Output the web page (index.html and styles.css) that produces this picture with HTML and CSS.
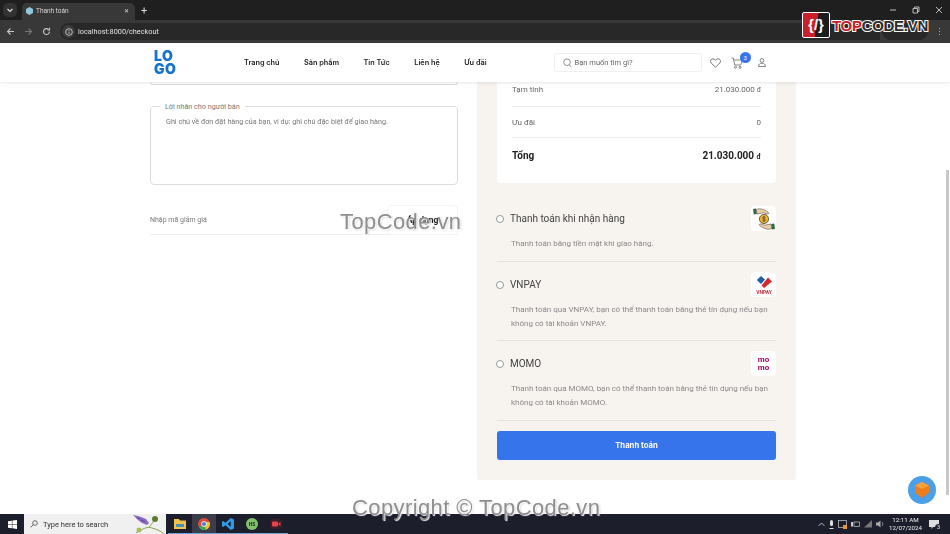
FILE: index.html
```html
<!DOCTYPE html>
<html>
  <head>
    <meta charset="utf-8" />
    <title>Thanh toán</title>
    <link rel="stylesheet" href="styles.css">
  </head>

  <body>
    <div class="screen">
      <!-- browser chrome -->
      <div class="tabstrip">
        <div class="tab-menu">
          <svg width="8" height="8" viewBox="0 0 8 8"><path d="M1.5 3l2.5 2.5L6.500 3" fill="none" stroke="#ddd" stroke-width="1.200"/></svg>
        </div>
        <div class="tab">
          <svg width="7" height="8" viewBox="0 0 7 8"><path d="M3.500 0L7 2v4L3.500 8 0 6V2z" fill="#8fc7dc"/></svg>
          <span class="tab-title">Thanh toán</span>
          <span class="tab-close">✕</span>
        </div>
        <span class="tab-new">+</span>
        <div class="window-btns">
          <svg width="8" height="8" viewBox="0 0 8 8"><path d="M1 4h6" stroke="#bbb" fill="none"/></svg>
          <svg width="8" height="8" viewBox="0 0 8 8"><path d="M1 2.500h4.500V7H1zM2.500 2.500V1H7v4.500H5.500" stroke="#bbb" fill="none"/></svg>
          <svg width="8" height="8" viewBox="0 0 8 8"><path d="M1 1l6 6M7 1L1 7" stroke="#bbb" fill="none"/></svg>
        </div>
      </div>
      <div class="toolbar">
        <svg class="nav-icon" width="9" height="9" viewBox="0 0 9 9"><path d="M8 4.500H1.500M4.500 1.500l-3 3 3 3" fill="none" stroke="#c7c7c7" stroke-width="1.100"/></svg>
        <svg class="nav-icon" width="9" height="9" viewBox="0 0 9 9"><path d="M1 4.500h6.500M4.500 1.500l3 3-3 3" fill="none" stroke="#757575" stroke-width="1.100"/></svg>
        <svg class="nav-icon" width="9" height="9" viewBox="0 0 9 9"><path d="M7.500 4.500a3 3 0 1 1-1-2.200M7.500 0.800v2.200H5.300" fill="none" stroke="#c7c7c7" stroke-width="1.100"/></svg>
        <div class="omnibox">
          <span class="site-info">
            <svg width="8" height="8" viewBox="0 0 8 8"><circle cx="4" cy="4" r="3.300" fill="none" stroke="#ddd" stroke-width=".8"/><path d="M4 3.500v2.200M4 2v.8" stroke="#ddd" stroke-width=".8"/></svg>
          </span>
          <span class="url">localhost:8000/checkout</span>
        </div>
        <div class="ext-pill"></div>
        <span class="kebab">⋮</span>
      </div>

      <div class="viewport">
        <div class="page">
          <header class="site-header">
            <div class="logo"><span>LO</span><span>GO</span></div>
            <nav class="site-nav">
              <a>Trang chủ</a>
              <a>Sản phẩm</a>
              <a>Tin Tức</a>
              <a>Liên hệ</a>
              <a>Ưu đãi</a>
            </nav>
            <div class="search">
              <svg width="9" height="10" viewBox="0 0 9 10"><circle cx="4" cy="4.200" r="3.300" fill="none" stroke="#666" stroke-width=".7"/><path d="M6.400 6.800l2 2.400" stroke="#666" stroke-width=".7"/></svg>
              <span>Bạn muốn tìm gì?</span>
            </div>
            <div class="header-icons">
              <svg width="11" height="10" viewBox="0 0 11 10"><path d="M5.500 9.300L1.200 5C-.2 3.500.6.800 2.900.8c1.200 0 2 .6 2.600 1.500C6.100 1.400 6.900.8 8.100.8c2.300 0 3.100 2.700 1.700 4.200z" fill="none" stroke="#555" stroke-width=".8"/></svg>
              <div class="cart">
                <svg width="12" height="12" viewBox="0 0 12 12"><path d="M.5 1h1.700l1.600 7h6l1.200-5H2.800" fill="none" stroke="#555" stroke-width=".7"/><circle cx="4.500" cy="10.300" r="1" fill="none" stroke="#555" stroke-width=".7"/><circle cx="9" cy="10.300" r="1" fill="none" stroke="#555" stroke-width=".7"/></svg>
                <span class="cart-badge">3</span>
              </div>
              <svg class="user-icon" width="8" height="9" viewBox="0 0 8 9"><circle cx="4" cy="2.500" r="1.900" fill="none" stroke="#555" stroke-width=".7"/><path d="M.5 8.500c0-2.200 1.400-3.300 3.500-3.300s3.500 1.100 3.500 3.300z" fill="none" stroke="#555" stroke-width=".7"/></svg>
            </div>
          </header>

          <main class="checkout">
            <section class="form-col">
              <div class="field-stub"></div>
              <div class="note-box">
                <span class="note-legend">Lời nhắn cho người bán</span>
                <p class="note-placeholder">Ghi chú về đơn đặt hàng của bạn, ví dụ: ghi chú đặc biệt để giao hàng.</p>
              </div>
              <div class="coupon">
                <span class="coupon-input">Nhập mã giảm giá</span>
                <button class="coupon-btn">Áp dụng</button>
              </div>
            </section>

            <section class="order-panel">
              <div class="summary">
                <div class="summary-row first"><span>Tạm tính</span><span>21.030.000 <small>đ</small></span></div>
                <div class="summary-row"><span>Ưu đãi</span><span>0</span></div>
                <div class="summary-row total"><span>Tổng</span><span>21.030.000 <small>đ</small></span></div>
              </div>

              <div class="pay-option cod">
                <div class="pay-head">
                  <span class="radio"></span>
                  <span class="pay-name">Thanh toán khi nhận hàng</span>
                  <span class="pay-icon">
                    <svg width="24" height="24" viewBox="0 0 24 24">
                      <path d="M1 2l3-.6.8 5.600-3 .6z" fill="#2f6b45"/>
                      <path d="M4.300 2.500c3-1.500 6-.5 10 1.500 2 1 3 2.500 2 3-1.500.5-3-1-5-1.200L5 7z" fill="#f0cfa6" stroke="#333" stroke-width=".5"/>
                      <path d="M23 22l-3 .6-.8-5.600 3-.6z" fill="#2f6b45"/>
                      <path d="M19.700 21.500c-3 1.500-6 .5-10-1.500-2-1-3-2.500-2-3 1.500-.5 3 1 5 1.200L19 17z" fill="#f0cfa6" stroke="#333" stroke-width=".5"/>
                      <circle cx="12" cy="12" r="4.600" fill="#eeb02e" stroke="#333" stroke-width=".7"/>
                      <path d="M13.500 10.400c-1-.9-3-.5-3 .8s3 .6 3 1.800-2 1.500-3.100.7M12 9v6" fill="none" stroke="#333" stroke-width=".6"/>
                    </svg>
                  </span>
                </div>
                <p class="pay-desc">Thanh toán bằng tiền mặt khi giao hàng.</p>
              </div>

              <div class="pay-option">
                <div class="pay-head">
                  <span class="radio"></span>
                  <span class="pay-name">VNPAY</span>
                  <span class="pay-icon">
                    <svg width="22" height="22" viewBox="0 0 22 22">
                      <path d="M8 2l4 3.500L8 10 3.800 6z" fill="#1d5fa8"/>
                      <path d="M15 3.500L19 7.500l-8 6.500-2.500-2.500z" fill="#d8262f"/>
                      <text x="11" y="19.500" class="vnpay-text">VNPAY</text>
                    </svg>
                  </span>
                </div>
                <p class="pay-desc">Thanh toán qua VNPAY, bạn có thể thanh toán bằng thẻ tín dụng nếu bạn không có tài khoản VNPAY.</p>
              </div>

              <div class="pay-option last">
                <div class="pay-head">
                  <span class="radio"></span>
                  <span class="pay-name">MOMO</span>
                  <span class="pay-icon momo"><span>mo</span><span>mo</span></span>
                </div>
                <p class="pay-desc">Thanh toán qua MOMO, bạn có thể thanh toán bằng thẻ tín dụng nếu bạn không có tài khoản MOMO.</p>
              </div>

              <button class="pay-btn">Thanh toán</button>
            </section>
          </main>
        </div>
        <div class="scrollbar"><div class="scroll-thumb"></div></div>

        <div class="chat-fab">
          <svg width="16" height="17" viewBox="0 0 16 17">
            <path d="M8 0l7 3.500v7L8 16 1 10.500v-7z" fill="#ee7d1a"/>
            <path d="M8 0l7 3.500L8 7 1 3.500z" fill="#f7a13a"/>
          </svg>
        </div>
      </div>

      <!-- windows taskbar -->
      <footer class="taskbar">
        <div class="start">
          <svg width="9" height="9" viewBox="0 0 9 9"><path d="M0 1.300l3.900-.6v3.500H0zM4.400.6L9 0v4.200H4.400zM0 4.700h3.900v3.600L0 7.700zM4.400 4.700H9V9l-4.600-.7z" fill="#fff"/></svg>
        </div>
        <div class="task-search">
          <svg width="8" height="8" viewBox="0 0 8 8"><circle cx="5" cy="3" r="2.300" fill="none" stroke="#333" stroke-width=".7"/><path d="M3.300 4.700L.8 7.300" stroke="#333" stroke-width=".8"/></svg>
          <span>Type here to search</span>
          <svg class="flower" width="34" height="20" viewBox="0 0 34 20">
            <path d="M1 1l5 1 3 1 5 2 3 4-2 2-5-2-4-3z" fill="#8a68c4"/>
            <path d="M5 4l3 1M9 6l4 2" stroke="#5f4596" stroke-width="1"/>
            <path d="M4 19c6-4 12-7 16-5 4 1 9 3 12 6M17 13l5-6" fill="none" stroke="#7c9a3e" stroke-width=".9"/>
            <circle cx="23" cy="5" r="3" fill="#5d7a34"/>
            <circle cx="7" cy="16" r="2.500" fill="#a7bf57"/>
          </svg>
        </div>
        <div class="task-apps">
          <span class="task-app">
            <svg width="12" height="11" viewBox="0 0 12 11"><path d="M0 1h5l1 1.500h6V11H0z" fill="#f0c24e"/><path d="M2 6h8v3H2z" fill="#4a8fb5"/></svg>
          </span>
          <span class="task-app active">
            <svg width="12" height="12" viewBox="0 0 12 12"><circle cx="6" cy="6" r="6" fill="#e04a3a"/><path d="M6 6L.9 9.200A6 6 0 0 0 8 11.700z" fill="#3aa757"/><path d="M6 6l2 5.700A6 6 0 0 0 11.600 4H6z" fill="#f5c02e"/><circle cx="6" cy="6" r="2.700" fill="#fff"/><circle cx="6" cy="6" r="2.100" fill="#3f81e0"/></svg>
          </span>
          <span class="task-app">
            <svg width="12" height="12" viewBox="0 0 12 12"><path d="M8.800 0L12 1.500v9L8.800 12 3.500 7.300 1.200 9 0 8.300V3.700L1.200 3l2.300 1.700zM8.800 3.300L5.600 6l3.200 2.700z" fill="#2f9be6"/></svg>
          </span>
          <span class="task-app">
            <span class="hs-badge">HS</span>
          </span>
          <span class="task-app">
            <svg width="12" height="10" viewBox="0 0 12 10"><rect x="0" y="0" width="12" height="10" rx="2" fill="#3a1d25"/><rect x="2" y="2.500" width="6" height="5" rx="1" fill="#e8434f"/><path d="M8.500 4.500l2-1.500v4l-2-1.500z" fill="#e8434f"/></svg>
          </span>
        </div>
        <div class="tray">
          <svg width="7" height="5" viewBox="0 0 7 5"><path d="M.5 4l3-3 3 3" fill="none" stroke="#ddd" stroke-width=".8"/></svg>
          <svg width="5" height="9" viewBox="0 0 5 9"><rect x="1" y="0" width="3" height="6" rx="1.500" fill="#ddd"/><path d="M.5 8.500h4" stroke="#ddd"/></svg>
          <svg width="9" height="9" viewBox="0 0 9 9"><rect x=".5" y=".5" width="8" height="7" fill="none" stroke="#ccc" stroke-width=".7"/><rect x="5" y="5" width="4" height="4" fill="#e79a2a"/></svg>
          <svg width="9" height="7" viewBox="0 0 9 7"><rect x="3" y="1" width="5.500" height="4.500" fill="none" stroke="#ccc" stroke-width=".7"/><rect x="0" y="1" width="2" height="4.500" fill="#ccc"/></svg>
          <svg width="8" height="8" viewBox="0 0 8 8"><path d="M0 7.500h8V0z" fill="#777"/></svg>
          <svg width="8" height="8" viewBox="0 0 8 8"><path d="M0 2.500h2L4.500.5v7L2 5.500H0z" fill="#aaa"/><path d="M6 2c1 1 1 3 0 4" fill="none" stroke="#aaa" stroke-width=".7"/></svg>
          <div class="clock"><span>12:11 AM</span><span>12/07/2024</span></div>
          <div class="notify">
            <svg width="10" height="9" viewBox="0 0 10 9"><path d="M0 0h10v7H4L2.500 9V7H0z" fill="#ddd"/></svg>
            <span class="notify-count">3</span>
          </div>
        </div>
      </footer>

      <!-- watermarks -->
      <div class="wm-logo">
        <span class="wm-mark">{/}</span>
        <span class="wm-name"><b>TOP</b>CODE.VN</span>
      </div>
      <div class="wm-mid">TopCode.vn</div>
      <div class="wm-bottom">Copyright © TopCode.vn</div>
    </div>
  </body>
</html>
```
FILE: styles.css
```css
* {
  box-sizing: border-box;
}
body,
html {
  margin: 0;
  padding: 0;
  overflow: hidden;
}
body {
  font-family: Roboto, "Liberation Sans", sans-serif;
  color: #333;
}
p {
  margin: 0;
}

.screen {
  position: relative;
  display: flex;
  flex-direction: column;
  width: 950px;
  height: 534px;
  overflow: hidden;
  background: #fff;
}
/* the reference is a scaled down capture, so everything but the watermarks is a bit soft */
.tabstrip,
.toolbar,
.viewport,
.taskbar {
  filter: blur(0.3px);
}

/* browser chrome */
.tabstrip {
  display: flex;
  align-items: flex-end;
  height: 20px;
  padding-left: 3px;
  background: #1f1f1f;
  color: #ddd;
}
.tab-menu {
  display: flex;
  align-items: center;
  justify-content: center;
  width: 14px;
  height: 14px;
  margin-right: 5px;
  margin-bottom: 3px;
  border-radius: 5px;
  background: #333;
}
.tab {
  display: flex;
  align-items: center;
  width: 113px;
  height: 17px;
  padding: 0 6px 2px 4px;
  border-radius: 5px 5px 0 0;
  background: #383838;
  font-size: 6.500px;
}
.tab-title {
  flex: 1;
  margin-left: 3px;
  color: #d6d6d6;
}
.tab-close {
  font-size: 6px;
}
.tab-new {
  margin: 0 0 2px 6px;
  font-size: 11px;
  line-height: 14px;
}
.window-btns {
  display: flex;
  align-items: center;
  gap: 15px;
  margin-left: auto;
  margin-right: 7px;
  margin-bottom: 6px;
}
.toolbar {
  display: flex;
  align-items: center;
  height: 23px;
  padding: 0 6px;
  background: #383838;
}
.nav-icon {
  margin-right: 9px;
}
.omnibox {
  display: flex;
  align-items: center;
  width: 820px;
  height: 17px;
  border-radius: 9px 0 0 9px;
  background: #282828;
}
.site-info {
  display: flex;
  align-items: center;
  justify-content: center;
  width: 13px;
  height: 13px;
  margin: 0 3px 0 2px;
  border-radius: 50%;
  background: #3c3c3c;
}
.url {
  font-size: 7.300px;
  color: #e3e3e3;
}
.ext-pill {
  width: 46px;
  height: 17px;
  margin-left: 2px;
  border-radius: 9px;
  background: #282828;
}
.kebab {
  margin-left: 7px;
  font-size: 9px;
  color: #bbb;
}

/* site page */
.viewport {
  position: relative;
  display: flex;
  flex: 1;
  min-height: 0;
  overflow: hidden;
}
.page {
  flex: 1;
  display: flex;
  flex-direction: column;
  min-width: 0;
}
.scrollbar {
  position: absolute;
  top: 39px;
  right: 0;
  bottom: 0;
  width: 5px;
  background: #fff;
}
.scroll-thumb {
  width: 3px;
  height: 325px;
  margin-top: 88px;
  margin-left: 1px;
  background: #c8c8c8;
}
.site-header {
  position: relative;
  z-index: 2;
  display: flex;
  align-items: center;
  height: 39px;
  padding-left: 154px;
  background: #fff;
  box-shadow: 0 1px 3px rgba(0, 0, 0, 0.1);
}
.logo {
  display: flex;
  flex-direction: column;
  width: 22px;
  font-family: Inter, sans-serif;
  font-size: 14px;
  font-weight: 900;
  line-height: 12.500px;
  letter-spacing: 0.500px;
  color: #1473cc;
}
.site-nav {
  display: flex;
  gap: 24.500px;
  margin-left: 68px;
  font-family: Inter, sans-serif;
  font-size: 7.300px;
  font-weight: 600;
  color: #222;
}
.search {
  display: flex;
  align-items: center;
  gap: 3px;
  width: 148px;
  height: 19px;
  margin-left: 67px;
  padding-left: 8px;
  border: 1px solid #f0f0f0;
  border-radius: 3px;
  font-size: 7.500px;
  color: #666;
}
.header-icons {
  display: flex;
  align-items: center;
  gap: 10px;
  margin-left: 8px;
}
.user-icon {
  margin-left: 5px;
}
.cart {
  position: relative;
  display: flex;
}
.cart-badge {
  position: absolute;
  top: -5px;
  left: 9px;
  width: 11px;
  height: 11px;
  border-radius: 50%;
  background: #3574ea;
  color: #fff;
  font-size: 6px;
  line-height: 11px;
  text-align: center;
}

/* checkout */
.checkout {
  display: flex;
  flex: 1;
  align-items: flex-start;
  gap: 19px;
  padding-left: 150px;
}
.form-col {
  width: 308px;
}
.field-stub {
  height: 3px;
  border: 1px solid #ddd;
  border-top: none;
  border-radius: 0 0 4px 4px;
}
.note-box {
  position: relative;
  height: 79px;
  margin-top: 21px;
  padding: 10px 15px;
  border: 1px solid #dcdcdc;
  border-radius: 4px;
}
.note-legend {
  position: absolute;
  top: -5px;
  left: 9px;
  padding: 0 5px;
  background: #fff;
  font-size: 7.200px;
  line-height: 9px;
  color: #777;
}
.note-placeholder {
  font-size: 7.200px;
  line-height: 10px;
  color: #777;
}
.coupon {
  display: flex;
  align-items: center;
  justify-content: space-between;
  height: 30px;
  margin-top: 20px;
  border-bottom: 1px solid #eee;
  font-size: 7px;
  color: #777;
}
.coupon-btn {
  width: 71px;
  height: 30px;
  padding: 0;
  border: 1px solid #f4f4f4;
  border-radius: 4px;
  background: #fff;
  font-family: inherit;
  font-size: 8.500px;
  font-weight: 700;
  color: #222;
}
.order-panel {
  width: 319px;
  height: 398px;
  padding: 0 20px;
  border-radius: 0 0 3px 3px;
  background: #f7f3ef;
}
.summary {
  padding: 0 15px;
  border-radius: 0 0 4px 4px;
  background: #fff;
}
.summary-row {
  display: flex;
  align-items: center;
  justify-content: space-between;
  height: 31px;
  border-bottom: 1px solid #ececec;
  font-size: 8px;
  color: #666;
}
.summary-row.first {
  height: 25px;
  padding-bottom: 10px;
}
.summary-row.total {
  height: 45px;
  padding-bottom: 11px;
  border-bottom: none;
  font-size: 10px;
  font-weight: 700;
  color: #222;
}
.summary-row small {
  font-size: 7px;
}
.pay-option {
  height: 79px;
  padding-top: 10px;
  border-bottom: 1px solid #e6e2de;
}
.pay-option.cod {
  padding-top: 23px;
}
.pay-option.last {
  height: 80px;
}
.pay-head {
  display: flex;
  align-items: center;
  height: 25px;
}
.radio {
  width: 8px;
  height: 8px;
  margin-left: -1px;
  margin-right: 6px;
  border: 1px solid #999;
  border-radius: 50%;
  background: #fff;
}
.pay-name {
  flex: 1;
  font-size: 10px;
  color: #444;
}
.pay-icon {
  display: flex;
  align-items: center;
  justify-content: center;
  width: 25px;
  height: 25px;
  border-radius: 4px;
  background: #fff;
}
.vnpay-text {
  font-size: 5px;
  font-weight: 700;
  text-anchor: middle;
  fill: #c6303a;
}
.pay-icon.momo {
  flex-direction: column;
  font-size: 8px;
  font-weight: 700;
  line-height: 7.500px;
  color: #a50064;
}
.pay-desc {
  margin-top: 6px;
  padding-left: 14px;
  font-size: 8px;
  line-height: 13.500px;
  color: #8a8a8a;
}
.pay-btn {
  display: block;
  width: 279px;
  height: 29px;
  margin-top: 10px;
  border: none;
  border-radius: 3px;
  background: #3574ea;
  color: #fff;
  font-family: Inter, sans-serif;
  font-size: 7.700px;
  font-weight: 700;
}
.chat-fab {
  position: absolute;
  top: 433px;
  left: 908px;
  display: flex;
  align-items: center;
  justify-content: center;
  width: 28px;
  height: 28px;
  border-radius: 50%;
  background: #4a9fe6;
}

/* taskbar */
.taskbar {
  display: flex;
  align-items: center;
  height: 20px;
  background: #1c1e2c;
}
.start {
  display: flex;
  align-items: center;
  justify-content: center;
  width: 24px;
  height: 20px;
}
.task-search {
  display: flex;
  align-items: center;
  width: 142px;
  height: 20px;
  padding-left: 6px;
  background: #f0f0f0;
  font-size: 7.500px;
  color: #333;
}
.task-search span {
  margin-left: 5px;
}
.flower {
  margin-left: auto;
}
.task-apps {
  display: flex;
  margin-left: 2px;
}
.task-app {
  display: flex;
  align-items: center;
  justify-content: center;
  width: 24px;
  height: 20px;
  border-bottom: 1px solid #6aa7d8;
}
.task-app.active {
  background: #3b3d4c;
}
.hs-badge {
  width: 12px;
  height: 12px;
  border-radius: 50%;
  background: #7fc36a;
  color: #222;
  font-size: 5px;
  font-weight: 700;
  line-height: 12px;
  text-align: center;
}
.tray {
  display: flex;
  align-items: center;
  gap: 4px;
  margin-left: auto;
  padding-right: 11px;
}
.clock {
  display: flex;
  flex-direction: column;
  align-items: center;
  margin: 0 3px 0 1px;
  font-size: 6.200px;
  line-height: 8px;
  color: #eee;
}
.notify {
  position: relative;
  display: flex;
}
.notify-count {
  position: absolute;
  right: -3px;
  bottom: -2px;
  width: 7px;
  height: 7px;
  border-radius: 50%;
  background: #1c1e2c;
  color: #eee;
  font-size: 5.500px;
  line-height: 7px;
  text-align: center;
}

/* watermarks */
.wm-logo {
  position: absolute;
  top: 12px;
  left: 802px;
  display: flex;
  align-items: center;
  font-family: "Liberation Sans", sans-serif;
}
.wm-mark {
  width: 28px;
  height: 26px;
  border: 1px solid #fff;
  border-radius: 2px;
  background: linear-gradient(100deg, #c9202a 52%, #1c1c1c 52%);
  color: #fff;
  font-size: 15px;
  font-weight: 700;
  line-height: 24px;
  text-align: center;
}
.wm-name {
  margin-left: 2px;
  font-size: 15px;
  font-weight: 700;
  color: #2c2c2c;
  letter-spacing: -0.300px;
  -webkit-text-stroke: 2px #fff;
  paint-order: stroke fill;
}
.wm-name b {
  color: #c9202a;
}
.wm-mid,
.wm-bottom {
  position: absolute;
  font-family: "Liberation Sans", sans-serif;
  font-size: 22px;
  letter-spacing: 0.400px;
  color: #8f8f8f;
  text-shadow: 1px 1px 1px #fff, 1px 1px 2px rgba(0, 0, 0, 0.3);
}
.wm-mid {
  top: 209px;
  left: 340px;
}
.wm-bottom {
  top: 495px;
  left: 352px;
}
```
